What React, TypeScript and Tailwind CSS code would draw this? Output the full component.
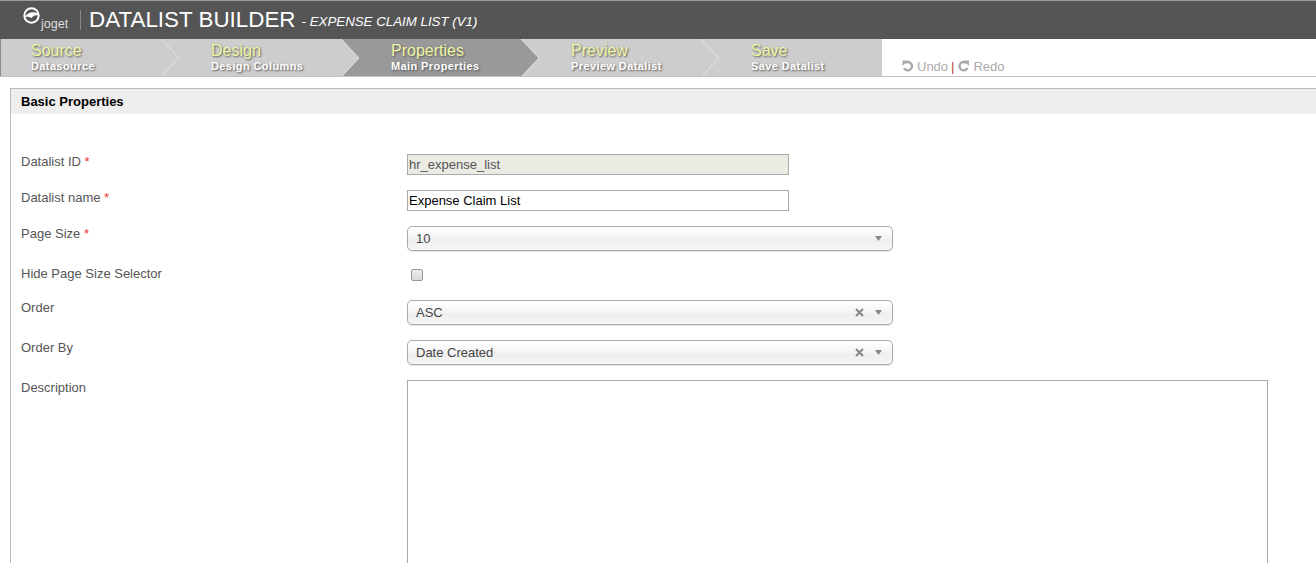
import React from "react";

const font = { fontFamily: '"Liberation Sans", Arial, sans-serif' };
const INACTIVE = "#cdcdcd";
const ACTIVE = "#999999";

function Step({ title, sub, active, nextActive, last, first }: { title: string; sub: string; active?: boolean; nextActive?: boolean; last?: boolean; first?: boolean }) {
  return (
    <div className={`relative h-[37px] ${last ? "w-[162px]" : "w-[180px]"} pl-[31px] pt-[3px] ${active ? "bg-[#999999]" : "bg-[#cdcdcd]"} ${first ? "shadow-[inset_1px_0_0_#8a8a8a]" : ""}`}>
      <div className="text-[16px] leading-[18px] text-[#eef6a4] [text-shadow:1px_1px_2px_#555]">{title}</div>
      <div className="text-[11px] leading-[12px] font-bold tracking-[0.4px] text-white [text-shadow:1px_1px_2px_#555]">{sub}</div>
      {!last && (
        <svg className="absolute right-0 top-0" width="20" height="37" viewBox="0 0 20 37">
          <rect width="20" height="37" fill={nextActive ? ACTIVE : INACTIVE} />
          <polygon points="0,0 1,0 19,19 2,37 0,37" fill={active ? ACTIVE : INACTIVE} />
          <polyline points="1,0 19,19 2,37" fill="none" stroke="#e4e4e4" strokeWidth="1" />
        </svg>
      )}
    </div>
  );
}

function Req() {
  return <span className="text-[#f03030]"> *</span>;
}

function Select({ value, clear }: { value: string; clear?: boolean }) {
  return (
    <div className="flex h-[25px] w-[486px] items-center rounded-[5px] border border-[#aaaaaa] bg-[linear-gradient(#ffffff_0%,#f4f4f4_50%,#eeeeee_52%,#f6f6f6_100%)] pl-[8px] pr-[10px] text-[13px] text-[#444444] shadow-[0_1px_1px_rgba(0,0,0,0.1)]">
      <span className="flex-1">{value}</span>
      {clear && (
        <svg className="mr-[11px]" width="9" height="9" viewBox="0 0 9 9">
          <path d="M1 1 L8 8 M8 1 L1 8" stroke="#888888" strokeWidth="2" />
        </svg>
      )}
      <svg width="7" height="5" viewBox="0 0 7 5">
        <polygon points="0,0 7,0 3.5,5" fill="#888888" />
      </svg>
    </div>
  );
}

function Row({ label, req, className, children }: { label: string; req?: boolean; className: string; children: React.ReactNode }) {
  return (
    <div className={`flex ${className}`}>
      <div className="w-[386px] shrink-0 text-[13px] leading-[15px] text-[#555555]">
        {label}
        {req && <Req />}
      </div>
      <div>{children}</div>
    </div>
  );
}

export default function App() {
  return (
    <div className="h-[563px] w-[1316px] overflow-hidden bg-white" style={font}>
      <header className="flex h-[39px] items-center border-t border-[#9a9a9a] bg-[#555555] pl-[23px] text-white">
        <div className="flex h-[26px] w-[47px] items-start">
          <svg className="mt-[0px] shrink-0" width="17" height="17" viewBox="0 0 17 17">
            <circle cx="8.5" cy="8.5" r="7.2" fill="none" stroke="#ffffff" strokeWidth="2" />
            <path d="M1.5 10 C5 5 10 4 15.5 6.5 L15.5 8.5 C12 7.5 10 9 8.5 11 C6 9.5 4 9.5 1.5 10 Z" fill="#ffffff" />
          </svg>
          <span className="mt-[10px] ml-[1px] text-[12.5px] leading-[14px] text-[#dddddd]">joget</span>
        </div>
        <div className="ml-[10px] h-[20px] w-px bg-[#888888]" />
        <span className="ml-[8px] text-[22.4px] leading-[26px]">DATALIST BUILDER</span>
        <span className="ml-[6px] mt-[4px] text-[13.3px] italic">- EXPENSE CLAIM LIST (V1)</span>
      </header>

      <nav className="flex h-[38px] border-b border-[#c4c4c4]">
        <Step title="Source" sub="Datasource" first />
        <Step title="Design" sub="Design Columns" nextActive />
        <Step title="Properties" sub="Main Properties" active />
        <Step title="Preview" sub="Preview Datalist" />
        <Step title="Save" sub="Save Datalist" last />
        <div className="flex flex-1 items-start pl-[20px] pt-[20px] text-[13px] leading-[15px] text-[#aaaaaa]">
          <svg className="mr-[3px] mt-[1px]" width="12" height="12" viewBox="0 0 12 12" fill="none">
            <path d="M3 3 A4.2 4.2 0 1 1 2 8" stroke="#aaaaaa" strokeWidth="2.4" />
            <polygon points="0.5,0.5 6,0.5 0.5,6" fill="#aaaaaa" />
          </svg>
          <span>Undo</span>
          <span className="mx-[3px] text-[#b04030]">|</span>
          <svg className="mr-[3px] mt-[1px]" width="13" height="12" viewBox="0 0 12 12" fill="none">
            <path d="M9 3 A4.2 4.2 0 1 0 10 8" stroke="#aaaaaa" strokeWidth="2.4" />
            <polygon points="11.5,0.5 6,0.5 11.5,6" fill="#aaaaaa" />
          </svg>
          <span>Redo</span>
        </div>
      </nav>

      <main className="ml-[10px] mt-[11px] h-[480px] border-l border-t border-[#bbbbbb]">
        <h2 className="h-[25px] bg-[#eeeeee] pl-[10px] text-[13px] font-bold leading-[25px] text-black">Basic Properties</h2>
        <div className="pl-[10px] pt-[40px]">
          <Row label="Datalist ID" req className="h-[36px]">
            <input readOnly value="hr_expense_list" className="block h-[21px] w-[382px] border border-[#aaaaaa] bg-[#ebebe4] px-[1px] text-[13px] text-[#545454] outline-none" />
          </Row>
          <Row label="Datalist name" req className="h-[36px]">
            <input readOnly value="Expense Claim List" className="block h-[21px] w-[382px] border border-[#aaaaaa] bg-white px-[1px] text-[13px] text-black outline-none" />
          </Row>
          <Row label="Page Size" req className="h-[40px]">
            <Select value="10" />
          </Row>
          <Row label="Hide Page Size Selector" className="h-[34px]">
            <div className="ml-[4px] mt-[3px] h-[12px] w-[12px] rounded-[2px] border border-[#999999] bg-[linear-gradient(#eeeeee,#d8d8d8)]" />
          </Row>
          <Row label="Order" className="h-[40px]">
            <Select value="ASC" clear />
          </Row>
          <Row label="Order By" className="h-[40px]">
            <Select value="Date Created" clear />
          </Row>
          <Row label="Description" className="h-[200px]">
            <div className="h-[200px] w-[861px] border border-[#aaaaaa] bg-white" />
          </Row>
        </div>
      </main>
    </div>
  );
}
